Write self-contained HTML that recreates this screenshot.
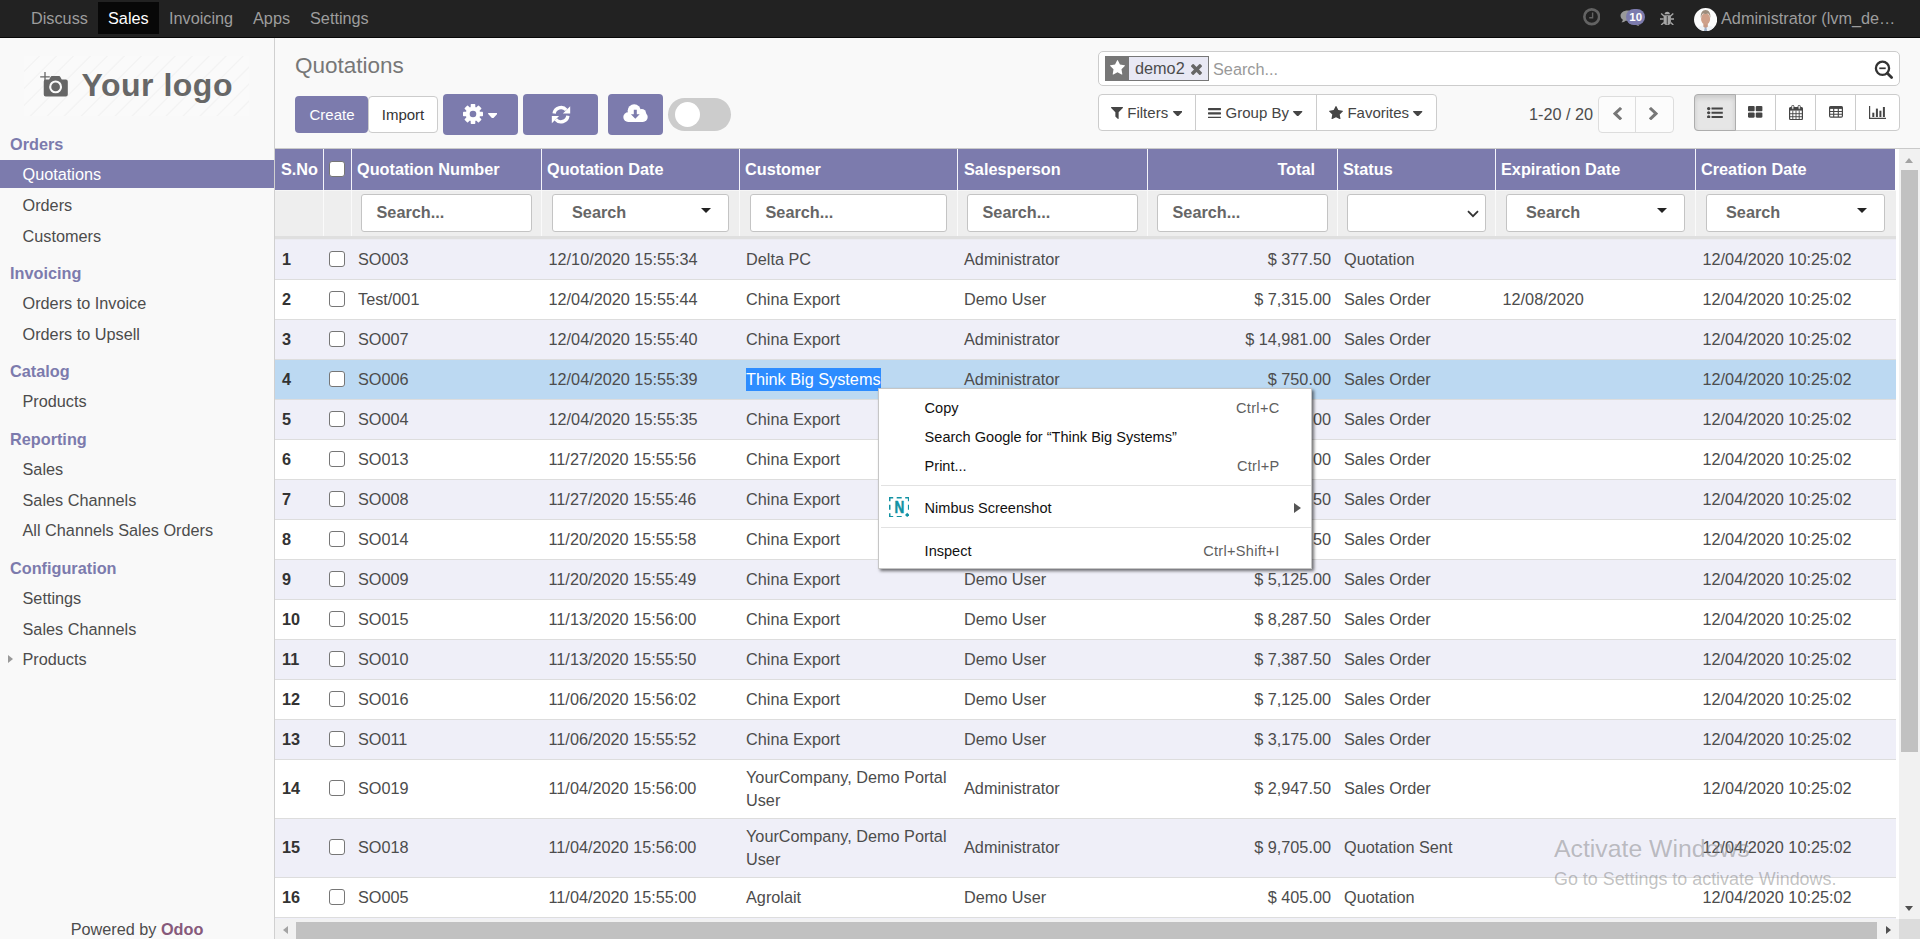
<!DOCTYPE html>
<html lang="en"><head><meta charset="utf-8"><title>Quotations - Odoo</title>
<style>
*{box-sizing:border-box;margin:0;padding:0}
html,body{width:1920px;height:939px;overflow:hidden;background:#f9f9f9}
body{font-family:"Liberation Sans",Arial,sans-serif;font-size:16.25px;color:#4c4c4c;position:relative;line-height:23.2px}
svg{display:block}
/* navbar */
#nav{position:absolute;left:0;top:0;width:1920px;height:38px;background:#222;border-bottom:1px solid #080808}
#nav .it{position:absolute;top:2px;height:32px;line-height:32px;color:#9d9d9d;white-space:nowrap}
#nav .it.act{background:#080808;color:#fff}
#nav .abs{position:absolute}
/* sidebar */
#side{position:absolute;left:0;top:38px;width:275px;height:901px;background:#f9f9f9;border-right:1px solid #d0d0d0}
#side .h{position:absolute;left:10px;font-weight:bold;color:#7c7bad;white-space:nowrap;line-height:24px;height:24px}
#side .a{position:absolute;left:0;width:274px;padding-left:22.5px;white-space:nowrap;line-height:28px;height:28px}
#side .a.act{background:#7c7bad;color:#fff}
#logo{position:absolute;left:24px;top:18px;width:225px;height:60px;background:repeating-linear-gradient(135deg,#fafafa 0,#fafafa 9.800px,#f3f3f3 10.800px,#f3f3f3 11.200px,#fafafa 12px)}
#logo .t{position:absolute;left:57.5px;top:9px;font-size:32px;font-weight:bold;color:#676767;line-height:40px;letter-spacing:.5px}
/* control panel */
#cp{position:absolute;left:275px;top:38px;width:1645px;height:111px;background:#f9f9f9;border-bottom:1px solid #cacaca}
#cp .abs{position:absolute}
.btn{position:absolute;border-radius:4px;text-align:center;white-space:nowrap}
.btn.p{background:#7c7bad;color:#fff}
.btn.w{background:#fff;border:1px solid #ccc;color:#333}
#title{position:absolute;left:20px;top:13px;font-size:22.5px;color:#777;line-height:30px}
/* table */
#main{position:absolute;left:275px;top:149px;width:1645px;height:790px;background:#fff;overflow:hidden}
#tablewrap{position:absolute;left:0;top:0;width:1621px;height:770px;overflow:hidden}
table#lst{border-collapse:separate;border-spacing:0;table-layout:fixed;width:1621px}
#lst th{background:#7c7bad;color:#fff;font-weight:bold;text-align:left;height:41px;padding:0 6px 0 5px;border-left:1px solid #f4f4fa;white-space:nowrap;overflow:hidden}
#lst th.first{border-left:0;padding-left:6px}
#lst th.num,#lst td.num{text-align:right}
#lst th.num{padding-right:22px}
#lst th.cb{padding:0}
#lst tr.flt td{background:linear-gradient(to right,#fafafa 0,#fafafa 1px,transparent 1px) 0 0/100% 46px no-repeat,linear-gradient(to bottom,#f6f6f6 0,#f6f6f6 1px,#eee 1px,#eee 46px,#dfdfdf 46px,#dfdfdf 49px,#ebebf1 49px,#ebebf1 50px) no-repeat;background-origin:border-box;height:50px;border-left:1px solid transparent;border-bottom:4px solid transparent;padding:0;vertical-align:top}
#lst tr.flt td:first-child{background:linear-gradient(to bottom,#f6f6f6 0,#f6f6f6 1px,#eee 1px,#eee 46px,#dfdfdf 46px,#dfdfdf 49px,#ebebf1 49px,#ebebf1 50px) no-repeat;background-origin:border-box}
#lst tr.flt td:first-child{border-left:0}
.fin{margin:4px 0 0 9px;height:38px;white-space:nowrap;background:#fff;border:1px solid #c4c4c4;border-radius:3px;font-weight:bold;color:#666;line-height:34px;padding-left:14.5px;position:relative}
.fin.dd{padding-left:19px;margin-left:10px}
.fin .car{position:absolute;right:17px;top:12.5px;width:0;height:0;border-left:5px solid transparent;border-right:5px solid transparent;border-top:5px solid #222}
.fin.sel2 svg{position:absolute;right:6px;top:14.5px}
#lst tbody td{height:40px;padding:0 6px 0 7px;border-bottom:1px solid #ddd;vertical-align:middle;overflow:hidden}
#lst tbody tr.odd td{background:#efeff8}
#lst tbody tr.hl td{background:#bcd9f2}
#lst tbody tr.tall td{height:59px}
#lst td.sn{font-weight:bold;color:#333}
#lst td.cb,#lst th.cb{padding:0}
.chk{display:block;width:16px;height:16px;margin-left:6px;position:relative;top:-1px;border:1.5px solid #767676;border-radius:3px;background:#fff}
.chk.hc{margin-left:5px;top:-1px}
.sel{background:#2d8cff;color:#fff;display:inline-block;line-height:23px;height:23px;margin-top:0}
/* scrollbars */
.sbv{position:absolute;left:1624px;top:0;width:21px;height:770px;background:#f1f1f1}
.sbh{position:absolute;left:0;top:770px;width:1624px;height:21px;background:#f1f1f1}
.sbc{position:absolute;left:1624px;top:770px;width:21px;height:21px;background:#dcdcdc}
/* context menu */
#ctx{position:absolute;left:878px;top:388px;width:433.5px;height:180.5px;background:#fff;border:1px solid #c6c6c6;box-shadow:2px 2px 3px rgba(0,0,0,.55);font-size:14.55px;color:#000;line-height:20px}
#ctx .mi{position:absolute;left:45.6px;white-space:nowrap;color:#111}
#ctx .sc{position:absolute;right:31px;white-space:nowrap;color:#5f5f5f;letter-spacing:.3px}
#ctx .sep{position:absolute;left:2px;width:430px;height:1px;background:#e2e2e2}
/* watermark */
#wm1{position:absolute;left:1554px;top:834px;font-size:24.8px;color:rgba(120,120,120,.45);white-space:nowrap;line-height:30px}
#wm2{position:absolute;left:1554px;top:868px;font-size:17.9px;color:rgba(120,120,120,.45);white-space:nowrap;line-height:22px}
.thumb{position:absolute;background:#c1c1c1}
.tri{position:absolute;width:0;height:0}
.tri.up{border-left:4.5px solid transparent;border-right:4.5px solid transparent;border-bottom:5px solid #a3a3a3}
.tri.dn{border-left:4.5px solid transparent;border-right:4.5px solid transparent;border-top:5px solid #505050}
.tri.lf{border-top:4.5px solid transparent;border-bottom:4.5px solid transparent;border-right:5px solid #a3a3a3}
.tri.rt{border-top:4.5px solid transparent;border-bottom:4.5px solid transparent;border-left:5px solid #505050}
#cp svg.abs,#nav svg.abs,#side svg.abs{position:absolute}
#lst tbody td:nth-child(4){padding-left:7.5px}
#lst th:nth-child(6){padding-left:6px}
#lst tbody td:nth-child(9),#lst tbody td:nth-child(10){padding-left:7.5px}
#lst th:last-child{border-right:1px solid #fff}

</style></head><body>
<div id="nav">
<div class="it" style="left:21px;width:77px;padding-left:10px">Discuss</div>
<div class="it act" style="left:98px;width:61px;padding-left:10px">Sales</div>
<div class="it" style="left:159px;width:84px;padding-left:10px">Invoicing</div>
<div class="it" style="left:243px;width:57px;padding-left:10px">Apps</div>
<div class="it" style="left:300px;width:79px;padding-left:10px">Settings</div>
<svg class="abs" style="left:1582.800px;top:8px" width="17.5" height="17.5" viewBox="0 0 17.5 17.5"><circle cx="8.750" cy="8.750" r="7.400" fill="none" stroke="#636363" stroke-width="2.600"/><path d="M9.600 4.500v5.200H6.200" fill="none" stroke="#636363" stroke-width="1.400"/></svg>
<svg class="abs" style="left:1619.500px;top:9.600px" width="21.5" height="17.2" viewBox="0 0 20 16"><path d="M7 0.5c3.6 0 6.5 2.1 6.5 4.8S10.600 10.100 7 10.100c-.6 0-1.200-.1-1.800-.2C4.200 10.800 2.800 11.400 1.300 11.500c.7-.7 1.200-1.500 1.400-2.500C1.300 8.100.5 6.800.5 5.300.5 2.600 3.400.5 7 .5z" fill="#999"/><path d="M15 5c2 .8 3.500 2.400 3.500 4.200 0 1.300-.7 2.500-1.900 3.300.2.900.7 1.700 1.300 2.300-1.400-.1-2.700-.6-3.600-1.500-.6.1-1.100.2-1.700.2-1.900 0-3.600-.6-4.800-1.600" fill="#999"/></svg>
<div class="abs" style="left:1626.200px;top:8.900px;width:19px;height:16.500px;border-radius:8.250px;background:#7c7bad;color:#fff;font-size:11.5px;font-weight:bold;line-height:16.500px;text-align:center">10</div>
<svg class="abs" style="left:1659.500px;top:10.500px" width="14.5" height="14.5" viewBox="0 0 14.5 14.5"><path d="M4.600 3.300a2.650 2.650 0 0 1 5.300 0z" fill="#a6a6a6"/><path d="M3.600 4.300h7.300v6.200a3.650 3.650 0 0 1-7.300 0z" fill="#a6a6a6"/><path d="M7.250 5v8.500" stroke="#222" stroke-width=".8"/><path d="M0 8h3.600M10.900 8h3.600M1.200 2.600l2.700 2.500M13.300 2.600l-2.700 2.500M1.200 14l2.700-2.600M13.300 14l-2.700-2.600" stroke="#a6a6a6" stroke-width="1.400" fill="none"/></svg>
<svg class="abs" style="left:1693.800px;top:7.900px" width="23.2" height="23.2" viewBox="0 0 23 23"><defs><clipPath id="av"><circle cx="11.5" cy="11.5" r="11.5"/></clipPath></defs><g clip-path="url(#av)"><rect width="23" height="23" fill="#fbfbfb"/><path d="M2.500 23c.3-3.600 2.800-5 6-5.600h6c3.200.6 5.700 2 6 5.600z" fill="#eef0f4"/><path d="M9.300 15.500h4.400v3.200l-2.200 1.500-2.200-1.500z" fill="#c79a85"/><ellipse cx="11.500" cy="10.800" rx="4.500" ry="5.900" fill="#cfa08a"/><path d="M6.800 10c-.6-4.800 1.400-8 4.700-8s5.300 3.200 4.700 8c-.5-2.600-1.300-4-2.200-4.600-1.500.6-3.500.6-5 0-.9.600-1.700 2-2.200 4.600z" fill="#9c8c7c"/><path d="M10.700 19.300h1.600l.8 3.700h-3.200z" fill="#9fb0c8"/></g></svg>
<div class="it" style="left:1721px;top:2px">Administrator (lvm_de…</div>
</div>
<div id="cp">
<div id="title">Quotations</div>
<div class="btn p" style="left:20px;top:58px;width:73px;height:37px;line-height:38px;border-radius:4px;font-size:15px;padding-left:1px;z-index:2">Create</div>
<div class="btn w" style="left:93px;top:58px;width:70px;height:37px;line-height:36px;border-radius:4px;font-size:15px">Import</div>
<div class="btn p" style="left:168px;top:56px;width:75px;height:41px"></div><svg class="abs" style="left:188px;top:66.3px" width="20" height="20" viewBox="-10 -10 20 20"><g fill="#fff"><circle r="7.3"/><rect x="-2.3" y="-10" width="4.6" height="20" rx=".7" transform="rotate(0)"/><rect x="-2.3" y="-10" width="4.6" height="20" rx=".7" transform="rotate(45)"/><rect x="-2.3" y="-10" width="4.6" height="20" rx=".7" transform="rotate(90)"/><rect x="-2.3" y="-10" width="4.6" height="20" rx=".7" transform="rotate(135)"/></g><circle r="3.3" fill="#7c7bad"/></svg><svg class="abs" style="left:212.60000000000002px;top:74.7px" width="9.4" height="5.6" viewBox="384 640 1024 576" preserveAspectRatio="none"><path d="M1408 704q0 26-19 45l-448 448q-19 19-45 19t-45-19l-448-448q-19-19-19-45t19-45 45-19h896q26 0 45 19t19 45z" fill="#fff"/></svg>
<div class="btn p" style="left:248px;top:56px;width:75px;height:41px"></div><svg class="abs" style="left:275.5px;top:66.5px" width="20" height="19.4" viewBox="0 0 20 19.4"><path d="M3.1 8.6A7 7 0 0 1 15.3 5" fill="none" stroke="#fff" stroke-width="3.400"/><path d="M19.2 1.2v7.300h-7.300z" fill="#fff"/><path d="M16.900 10.800A7 7 0 0 1 4.700 14.400" fill="none" stroke="#fff" stroke-width="3.400"/><path d="M.8 18.200v-7.300h7.300z" fill="#fff"/></svg>
<div class="btn p" style="left:333px;top:56px;width:55px;height:41px"></div><svg class="abs" style="left:348px;top:66.2px" width="25" height="18" viewBox="0 0 25 18"><g fill="#fff"><circle cx="11.2" cy="6.800" r="6.600"/><circle cx="18.800" cy="9.200" r="4.300"/><rect x="0.3" y="8.200" width="24.400" height="9.800" rx="4.900"/></g><path d="M10.800 5.800h3v4.400h2.900l-4.400 4.500-4.400-4.500h2.900z" fill="#7c7bad"/></svg>
<div class="abs" style="left:393px;top:60px;width:63px;height:33px;border-radius:17px;background:#ccc"></div>
<div class="abs" style="left:400px;top:64px;width:25px;height:25px;border-radius:13px;background:#fff"></div>
<!-- search -->
<div class="abs" style="left:823px;top:13px;width:802px;height:35px;background:#fff;border:1px solid #ccc;border-radius:5px"></div>
<div class="abs" style="left:830px;top:18px;width:24px;height:25px;background:#777"></div>
<div class="abs" style="left:854px;top:18px;width:80px;height:25px;background:#e8e8f4;border:1px solid #777;border-left:0;line-height:23px;padding-left:6px;color:#4c4c4c">demo2</div>
<svg class="abs" style="left:835px;top:22.299999999999997px" width="15" height="14.6" viewBox="0 32 1664 1587" preserveAspectRatio="none"><path d="M1664 647q0 22-26 48l-363 354 86 500q1 7 1 20 0 21-10.5 35.500t-30.500 14.500q-19 0-40-12l-449-236-449 236q-22 12-40 12-21 0-31.500-14.500t-10.500-35.500q0-6 2-20l86-500-364-354q-25-27-25-48 0-37 56-46l502-73 225-455q19-41 49-41t49 41l225 455 502 73q56 9 56 46z" fill="#fff"/></svg><svg class="abs" style="left:915.7px;top:25.5px" width="11" height="11" viewBox="302 366 1188 1188" preserveAspectRatio="none"><path d="M1490 1322q0 40-28 68l-136 136q-28 28-68 28t-68-28l-294-294-294 294q-28 28-68 28t-68-28l-136-136q-28-28-28-68t28-68l294-294-294-294q-28-28-28-68t28-68l136-136q28-28 68-28t68 28l294 294 294-294q28-28 68-28t68 28l136 136q28 28 28 68t-28 68l-294 294 294 294q28 28 28 68z" fill="#666"/></svg><div class="abs" style="left:938px;top:19px;line-height:25px;color:#999">Search...</div><svg class="abs" style="left:1598.5px;top:21.799999999999997px" width="20" height="20" viewBox="0 0 20 20"><circle cx="8.500" cy="8.300" r="6.600" fill="none" stroke="#333" stroke-width="2.300"/><path d="M13.300 13.200l4.300 4.300" stroke="#333" stroke-width="2.800" stroke-linecap="round"/><path d="M5.300 8.300h6.400" stroke="#333" stroke-width="1.700"/></svg>
<!-- filter buttons -->
<div class="abs" style="left:823px;top:56px;width:339px;height:37px;background:#fff;border:1px solid #ccc;border-radius:4px"></div>
<div class="abs" style="left:920px;top:57px;width:1px;height:35px;background:#ccc"></div>
<div class="abs" style="left:1041px;top:57px;width:1px;height:35px;background:#ccc"></div>
<div class="abs" style="left:852.3px;top:63px;color:#444;line-height:24px;font-size:15px">Filters</div>
<div class="abs" style="left:950.600px;top:63px;color:#444;line-height:24px;font-size:15px">Group By</div>
<div class="abs" style="left:1072.400px;top:63px;color:#444;line-height:24px;font-size:15px">Favorites</div>
<svg class="abs" style="left:836.4000000000001px;top:69.3px" width="12" height="12" viewBox="190.979 256 1410.04 1408" preserveAspectRatio="none"><path d="M1595 295q17 41-14 70l-493 493v742q0 42-39 59-13 5-25 5-27 0-45-19l-256-256q-19-19-19-45v-486l-493-493q-31-29-14-70 17-39 59-39h1280q42 0 59 39z" fill="#454545"/></svg><svg class="abs" style="left:933.4000000000001px;top:69.5px" width="13" height="10.8" viewBox="128 256 1536 1280" preserveAspectRatio="none"><path d="M1664 1344v128q0 26-19 45t-45 19h-1408q-26 0-45-19t-19-45v-128q0-26 19-45t45-19h1408q26 0 45 19t19 45zm0-512v128q0 26-19 45t-45 19h-1408q-26 0-45-19t-19-45v-128q0-26 19-45t45-19h1408q26 0 45 19t19 45zm0-512v128q0 26-19 45t-45 19h-1408q-26 0-45-19t-19-45v-128q0-26 19-45t45-19h1408q26 0 45 19t19 45z" fill="#454545"/></svg><svg class="abs" style="left:1053.9px;top:68px" width="14" height="13.2" viewBox="0 32 1664 1587" preserveAspectRatio="none"><path d="M1664 647q0 22-26 48l-363 354 86 500q1 7 1 20 0 21-10.5 35.500t-30.500 14.500q-19 0-40-12l-449-236-449 236q-22 12-40 12-21 0-31.500-14.500t-10.500-35.500q0-6 2-20l86-500-364-354q-25-27-25-48 0-37 56-46l502-73 225-455q19-41 49-41t49 41l225 455 502 73q56 9 56 46z" fill="#454545"/></svg><svg class="abs" style="left:897.5px;top:73px" width="9.4" height="5.4" viewBox="384 640 1024 576" preserveAspectRatio="none"><path d="M1408 704q0 26-19 45l-448 448q-19 19-45 19t-45-19l-448-448q-19-19-19-45t19-45 45-19h896q26 0 45 19t19 45z" fill="#454545"/></svg><svg class="abs" style="left:1018.3px;top:73px" width="9.4" height="5.4" viewBox="384 640 1024 576" preserveAspectRatio="none"><path d="M1408 704q0 26-19 45l-448 448q-19 19-45 19t-45-19l-448-448q-19-19-19-45t19-45 45-19h896q26 0 45 19t19 45z" fill="#454545"/></svg><svg class="abs" style="left:1138.2px;top:73px" width="9.4" height="5.4" viewBox="384 640 1024 576" preserveAspectRatio="none"><path d="M1408 704q0 26-19 45l-448 448q-19 19-45 19t-45-19l-448-448q-19-19-19-45t19-45 45-19h896q26 0 45 19t19 45z" fill="#454545"/></svg>
<!-- pager -->
<div class="abs" style="left:1254px;top:64px;line-height:24px">1-20 / 20</div>
<div class="abs" style="left:1323px;top:58px;width:76px;height:37px;background:#fcfcfc;border:1px solid #ddd;border-radius:4px"></div>
<div class="abs" style="left:1360px;top:59px;width:1px;height:35px;background:#ddd"></div>
<!-- view switcher -->
<div class="abs" style="left:1419px;top:56px;width:206px;height:37px;background:#fff;border:1px solid #ccc;border-radius:4px"></div>
<div class="abs" style="left:1419px;top:56px;width:42px;height:37px;background:#e6e6e6;border:1px solid #adadad;border-radius:4px 0 0 4px;box-shadow:inset 0 3px 5px rgba(0,0,0,.125)"></div>
<div class="abs" style="left:1500px;top:57px;width:1px;height:35px;background:#ccc"></div>
<div class="abs" style="left:1540px;top:57px;width:1px;height:35px;background:#ccc"></div>
<div class="abs" style="left:1580px;top:57px;width:1px;height:35px;background:#ccc"></div>
<svg class="abs" style="left:1338.3px;top:69.2px" width="9" height="13.2" viewBox="410 26 1036 1612" preserveAspectRatio="none"><path d="M1427 301l-531 531 531 531q19 19 19 45t-19 45l-166 166q-19 19-45 19t-45-19l-742-742q-19-19-19-45t19-45l742-742q19-19 45-19t45 19l166 166q19 19 19 45t-19 45z" fill="#777"/></svg><svg class="abs" style="left:1374.3px;top:69.2px" width="9" height="13.2" viewBox="346 26 1036 1612" preserveAspectRatio="none"><path d="M1363 877l-742 742q-19 19-45 19t-45-19l-166-166q-19-19-19-45t19-45l531-531-531-531q-19-19-19-45t19-45l166-166q19-19 45-19t45 19l742 742q19 19 19 45t-19 45z" fill="#777"/></svg><svg class="abs" style="left:1432px;top:68.8px" width="15.8" height="11.5" viewBox="0 192 1792 1408" preserveAspectRatio="none"><path d="M384 1408q0 80-56 136t-136 56-136-56-56-136 56-136 136-56 136 56 56 136zm0-512q0 80-56 136t-136 56-136-56-56-136 56-136 136-56 136 56 56 136zm1408 416v192q0 13-9.500 22.500t-22.500 9.500h-1216q-13 0-22.500-9.500t-9.500-22.500v-192q0-13 9.500-22.500t22.500-9.500h1216q13 0 22.500 9.500t9.500 22.500zm-1408-928q0 80-56 136t-136 56-136-56-56-136 56-136 136-56 136 56 56 136zm1408 416v192q0 13-9.500 22.500t-22.500 9.500h-1216q-13 0-22.500-9.500t-9.500-22.500v-192q0-13 9.500-22.500t22.500-9.500h1216q13 0 22.500 9.500t9.500 22.500zm0-512v192q0 13-9.500 22.500t-22.500 9.500h-1216q-13 0-22.500-9.500t-9.500-22.500v-192q0-13 9.500-22.500t22.500-9.500h1216q13 0 22.500 9.500t9.500 22.500z" fill="#454545"/></svg><svg class="abs" style="left:1473.2px;top:68.2px" width="14.4" height="11.7" viewBox="64 128 1664 1408" preserveAspectRatio="none"><path d="M832 1024v384q0 52-38 90t-90 38h-512q-52 0-90-38t-38-90v-384q0-52 38-90t90-38h512q52 0 90 38t38 90zm0-768v384q0 52-38 90t-90 38h-512q-52 0-90-38t-38-90v-384q0-52 38-90t90-38h512q52 0 90 38t38 90zm896 768v384q0 52-38 90t-90 38h-512q-52 0-90-38t-38-90v-384q0-52 38-90t90-38h512q52 0 90 38t38 90zm0-768v384q0 52-38 90t-90 38h-512q-52 0-90-38t-38-90v-384q0-52 38-90t90-38h512q52 0 90 38t38 90z" fill="#454545"/></svg><svg class="abs" style="left:1514px;top:66.8px" width="14" height="15.2" viewBox="0 0 14 15.2"><rect x=".6" y="2.600" width="12.800" height="12" rx="1" fill="#fff" stroke="#454545" stroke-width="1.200"/><rect x=".6" y="2.600" width="12.800" height="3" fill="#454545"/><path d="M.6 8.700h12.800M.6 11.700h12.800M3.800 5.600v9M7 5.600v9M10.200 5.600v9" stroke="#454545" stroke-width=".9" fill="none"/><rect x="2.700" y="0.300" width="2.200" height="4" rx="1" fill="#fff" stroke="#454545" stroke-width=".9"/><rect x="9.100" y="0.300" width="2.200" height="4" rx="1" fill="#fff" stroke="#454545" stroke-width=".9"/></svg><svg class="abs" style="left:1553.9px;top:68.2px" width="14" height="11.7" viewBox="0 0 14 11.7"><rect x=".6" y=".6" width="12.800" height="10.500" rx="1.200" fill="#fff" stroke="#454545" stroke-width="1.200"/><rect x=".6" y=".6" width="12.800" height="2.300" fill="#454545"/><path d="M.6 5.500h12.800M.6 8.300h12.800M4.700 2v9M9.300 2v9" stroke="#454545" stroke-width="1.100" fill="none"/></svg><svg class="abs" style="left:1593.6px;top:68.2px" width="17.6" height="13" viewBox="0 0 17.6 13"><path d="M.6 0v12.400h17" fill="none" stroke="#454545" stroke-width="1.200"/><g fill="#454545"><rect x="3.300" y="6.700" width="2" height="4.300"/><rect x="6.900" y="2.600" width="2" height="8.400"/><rect x="10.400" y="4.700" width="2" height="6.300"/><rect x="13.900" y="1" width="2" height="10"/></g></svg>
</div>

<div id="side">
<div id="logo"><svg class="abs" style="left:16px;top:15.5px" width="28" height="25" viewBox="0 0 28 25"><path d="M5 0v9.600M.2 4.800h9.600" stroke="#666" stroke-width="1.300" fill="none"/><path d="M5.750 7.500h3.400l1.400-2.600a1.500 1.500 0 0 1 1.300-.9h7.200a1.500 1.500 0 0 1 1.300.9l1.400 2.600h4.050a2 2 0 0 1 2 2v13a2 2 0 0 1-2 2h-20.050a2 2 0 0 1-2-2v-13a2 2 0 0 1 2-2z" fill="#666"/><circle cx="15.600" cy="14.900" r="5.400" fill="#666" stroke="#fafafa" stroke-width="2.100"/></svg><div class="t">Your logo</div></div>
<div class="h" style="top:94px">Orders</div>
<div class="a act" style="top:122px">Quotations</div>
<div class="a" style="top:153px">Orders</div>
<div class="a" style="top:184px">Customers</div>
<div class="h" style="top:223px">Invoicing</div>
<div class="a" style="top:251px">Orders to Invoice</div>
<div class="a" style="top:282px">Orders to Upsell</div>
<div class="h" style="top:321px">Catalog</div>
<div class="a" style="top:349px">Products</div>
<div class="h" style="top:389px">Reporting</div>
<div class="a" style="top:417px">Sales</div>
<div class="a" style="top:448px">Sales Channels</div>
<div class="a" style="top:478px">All Channels Sales Orders</div>
<div class="h" style="top:518px">Configuration</div>
<div class="a" style="top:546px">Settings</div>
<div class="a" style="top:577px">Sales Channels</div>
<i style="position:absolute;left:8px;top:617px;width:0;height:0;border-top:4.500px solid transparent;border-bottom:4.500px solid transparent;border-left:5px solid #999"></i><div class="a" style="top:607px">Products</div>
<div class="a" style="top:877px;padding-left:0;text-align:center;color:#4c4c4c">Powered by <b style="color:#875a7b">Odoo</b></div>
</div>

<div id="main">
<div id="tablewrap"><table id="lst">
<colgroup><col style="width:48px"><col style="width:28px"><col style="width:190px"><col style="width:198px"><col style="width:218px"><col style="width:190px"><col style="width:190px"><col style="width:158px"><col style="width:200px"><col style="width:201px"></colgroup>
<thead>
<tr class="hd"><th class="first">S.No</th><th class="cb"><i class="chk hc"></i></th><th>Quotation Number</th><th>Quotation Date</th><th>Customer</th><th>Salesperson</th><th class="num">Total</th><th>Status</th><th>Expiration Date</th><th>Creation Date</th></tr>
<tr class="flt"><td></td><td></td>
<td><div class="fin" style="width:171px">Search...</div></td>
<td><div class="fin dd" style="width:177px">Search<b class="car"></b></div></td>
<td><div class="fin" style="width:197px;margin-left:10px">Search...</div></td>
<td><div class="fin" style="width:171px">Search...</div></td>
<td><div class="fin" style="width:171px">Search...</div></td>
<td><div class="fin sel2" style="width:139px"><svg width="12" height="8" viewBox="0 0 12 8"><path d="M1 1.2 L6 6.2 L11 1.2" fill="none" stroke="#333" stroke-width="1.8"/></svg></div></td>
<td><div class="fin dd" style="width:179px">Search<b class="car"></b></div></td>
<td><div class="fin dd" style="width:179px">Search<b class="car"></b></div></td>
</tr>
</thead>
<tbody>
<tr class="odd"><td class="sn">1</td><td class="cb"><i class="chk"></i></td><td>SO003</td><td>12/10/2020 15:55:34</td><td>Delta PC</td><td>Administrator</td><td class="num">$ 377.50</td><td>Quotation</td><td></td><td>12/04/2020 10:25:02</td></tr>
<tr class=""><td class="sn">2</td><td class="cb"><i class="chk"></i></td><td>Test/001</td><td>12/04/2020 15:55:44</td><td>China Export</td><td>Demo User</td><td class="num">$ 7,315.00</td><td>Sales Order</td><td>12/08/2020</td><td>12/04/2020 10:25:02</td></tr>
<tr class="odd"><td class="sn">3</td><td class="cb"><i class="chk"></i></td><td>SO007</td><td>12/04/2020 15:55:40</td><td>China Export</td><td>Administrator</td><td class="num">$ 14,981.00</td><td>Sales Order</td><td></td><td>12/04/2020 10:25:02</td></tr>
<tr class="hl"><td class="sn">4</td><td class="cb"><i class="chk"></i></td><td>SO006</td><td>12/04/2020 15:55:39</td><td><span class="sel">Think Big Systems</span></td><td>Administrator</td><td class="num">$ 750.00</td><td>Sales Order</td><td></td><td>12/04/2020 10:25:02</td></tr>
<tr class="odd"><td class="sn">5</td><td class="cb"><i class="chk"></i></td><td>SO004</td><td>12/04/2020 15:55:35</td><td>China Export</td><td>Administrator</td><td class="num">$ 9,500.00</td><td>Sales Order</td><td></td><td>12/04/2020 10:25:02</td></tr>
<tr class=""><td class="sn">6</td><td class="cb"><i class="chk"></i></td><td>SO013</td><td>11/27/2020 15:55:56</td><td>China Export</td><td>Demo User</td><td class="num">$ 6,400.00</td><td>Sales Order</td><td></td><td>12/04/2020 10:25:02</td></tr>
<tr class="odd"><td class="sn">7</td><td class="cb"><i class="chk"></i></td><td>SO008</td><td>11/27/2020 15:55:46</td><td>China Export</td><td>Demo User</td><td class="num">$ 4,837.50</td><td>Sales Order</td><td></td><td>12/04/2020 10:25:02</td></tr>
<tr class=""><td class="sn">8</td><td class="cb"><i class="chk"></i></td><td>SO014</td><td>11/20/2020 15:55:58</td><td>China Export</td><td>Demo User</td><td class="num">$ 2,137.50</td><td>Sales Order</td><td></td><td>12/04/2020 10:25:02</td></tr>
<tr class="odd"><td class="sn">9</td><td class="cb"><i class="chk"></i></td><td>SO009</td><td>11/20/2020 15:55:49</td><td>China Export</td><td>Demo User</td><td class="num">$ 5,125.00</td><td>Sales Order</td><td></td><td>12/04/2020 10:25:02</td></tr>
<tr class=""><td class="sn">10</td><td class="cb"><i class="chk"></i></td><td>SO015</td><td>11/13/2020 15:56:00</td><td>China Export</td><td>Demo User</td><td class="num">$ 8,287.50</td><td>Sales Order</td><td></td><td>12/04/2020 10:25:02</td></tr>
<tr class="odd"><td class="sn">11</td><td class="cb"><i class="chk"></i></td><td>SO010</td><td>11/13/2020 15:55:50</td><td>China Export</td><td>Demo User</td><td class="num">$ 7,387.50</td><td>Sales Order</td><td></td><td>12/04/2020 10:25:02</td></tr>
<tr class=""><td class="sn">12</td><td class="cb"><i class="chk"></i></td><td>SO016</td><td>11/06/2020 15:56:02</td><td>China Export</td><td>Demo User</td><td class="num">$ 7,125.00</td><td>Sales Order</td><td></td><td>12/04/2020 10:25:02</td></tr>
<tr class="odd"><td class="sn">13</td><td class="cb"><i class="chk"></i></td><td>SO011</td><td>11/06/2020 15:55:52</td><td>China Export</td><td>Demo User</td><td class="num">$ 3,175.00</td><td>Sales Order</td><td></td><td>12/04/2020 10:25:02</td></tr>
<tr class="tall"><td class="sn">14</td><td class="cb"><i class="chk"></i></td><td>SO019</td><td>11/04/2020 15:56:00</td><td>YourCompany, Demo Portal User</td><td>Administrator</td><td class="num">$ 2,947.50</td><td>Sales Order</td><td></td><td>12/04/2020 10:25:02</td></tr>
<tr class="odd tall"><td class="sn">15</td><td class="cb"><i class="chk"></i></td><td>SO018</td><td>11/04/2020 15:56:00</td><td>YourCompany, Demo Portal User</td><td>Administrator</td><td class="num">$ 9,705.00</td><td>Quotation Sent</td><td></td><td>12/04/2020 10:25:02</td></tr>
<tr class=""><td class="sn">16</td><td class="cb"><i class="chk"></i></td><td>SO005</td><td>11/04/2020 15:55:00</td><td>Agrolait</td><td>Demo User</td><td class="num">$ 405.00</td><td>Quotation</td><td></td><td>12/04/2020 10:25:02</td></tr>
<tr class="odd"><td class="sn">17</td><td class="cb"><i class="chk"></i></td><td>SO002</td><td>11/04/2020 15:55:00</td><td>Agrolait</td><td>Demo User</td><td class="num">$ 2,947.50</td><td>Quotation</td><td></td><td>12/04/2020 10:25:02</td></tr>
</tbody></table></div>
<div class="sbv"><i class="thumb" style="left:2px;top:21px;width:17px;height:582px"></i><i class="tri up" style="left:6px;top:9px"></i><i class="tri dn" style="left:6px;top:757px"></i></div>
<div class="sbh"><i class="thumb" style="left:21px;top:3px;width:1581px;height:18px"></i><i class="tri lf" style="left:8px;top:7px"></i><i class="tri rt" style="left:1611px;top:7px"></i></div>
<div class="sbc"></div>
</div>
<div id="wm1">Activate Windows</div>
<div id="wm2">Go to Settings to activate Windows.</div>
<div id="ctx">
<div class="mi" style="top:9px">Copy</div><div class="sc" style="top:9px">Ctrl+C</div>
<div class="mi" style="top:38px">Search Google for “Think Big Systems”</div>
<div class="mi" style="top:67px">Print...</div><div class="sc" style="top:67px">Ctrl+P</div>
<div class="sep" style="top:96px"></div>
<svg style="position:absolute;left:9.800px;top:107.900px" width="20.4" height="20.4" viewBox="0 0 20.4 20.4"><path d="M.750 4.200V.750H4.200M7.700 .750h5M16.200 .750h3.450V4.200M19.650 7.700v5M.750 7.700v5M.750 16.200v3.450H4.200M7.700 19.650h5" fill="none" stroke="#1292a3" stroke-width="1.500"/><path d="M18.200 15.700l2.200 2.200-2.200 2.200-2.200-2.200z" fill="#1292a3"/><text transform="scale(.8 1)" x="12.900" y="16.400" text-anchor="middle" font-family="Liberation Sans, sans-serif" font-weight="bold" font-size="17" fill="#1292a3" stroke="#1292a3" stroke-width=".5" stroke-linejoin="round">N</text></svg>
<div class="mi" style="top:109px">Nimbus Screenshot</div><i style="position:absolute;left:415px;top:114px;width:0;height:0;border-top:5px solid transparent;border-bottom:5px solid transparent;border-left:7.500px solid #555"></i>
<div class="sep" style="top:138px"></div>
<div class="mi" style="top:152px">Inspect</div><div class="sc" style="top:152px">Ctrl+Shift+I</div>
</div>

</body></html>
